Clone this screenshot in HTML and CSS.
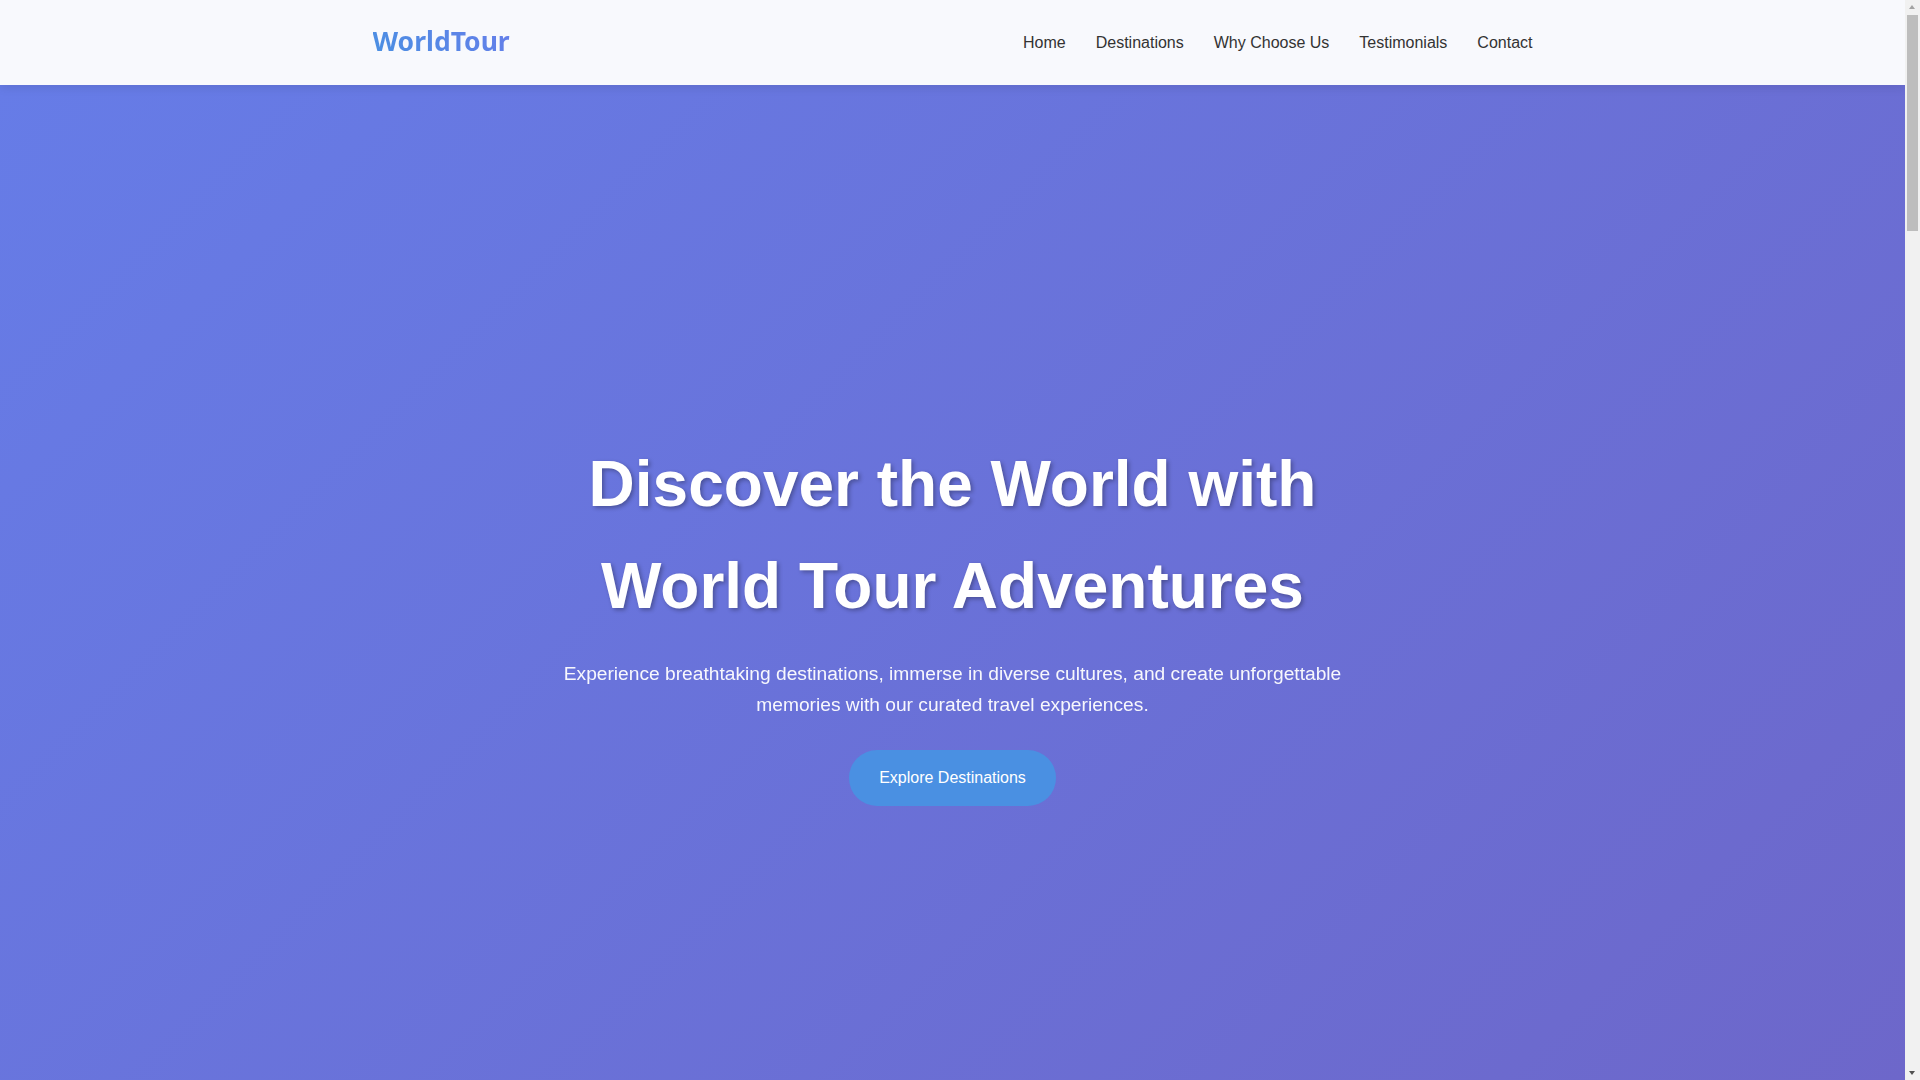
FILE: index.html
```html
<!DOCTYPE html>
<html lang="en">
<head>
<meta charset="UTF-8">
<title>WorldTour - Discover the World</title>
<link rel="stylesheet" href="styles.css">
</head>
<body>
<header class="site-header">
  <div class="container header-inner">
    <a class="logo" href="#">WorldTour</a>
    <nav class="main-nav">
      <a href="#home">Home</a>
      <a href="#destinations">Destinations</a>
      <a href="#why">Why Choose Us</a>
      <a href="#testimonials">Testimonials</a>
      <a href="#contact">Contact</a>
    </nav>
  </div>
</header>

<section class="hero" id="home">
  <div class="hero-content">
    <h1 class="hero-title">Discover the World with<br>World Tour Adventures</h1>
    <p class="hero-text">Experience breathtaking destinations, immerse in diverse cultures, and create unforgettable memories with our curated travel experiences.</p>
    <a class="btn" href="#destinations">Explore Destinations</a>
  </div>
</section>

<div class="scrollbar" aria-hidden="true">
  <span class="sb-arrow sb-up"></span>
  <span class="sb-thumb"></span>
  <span class="sb-arrow sb-down"></span>
</div>
</body>
</html>
```

FILE: styles.css
```css
* {
  box-sizing: border-box;
}

html,
body {
  height: 100%;
}

body {
  margin: 0;
  padding-right: 15px;
  font-family: "Liberation Sans", Arial, sans-serif;
  line-height: 1.6;
  color: #333;
  background: #fff;
  overflow: hidden;
}

.container {
  max-width: 1200px;
  margin: 0 auto;
  padding: 0 20px;
}

.site-header {
  position: relative;
  z-index: 100;
  background: #f8f9fd;
  box-shadow: 0 2px 10px rgba(0, 0, 0, 0.1);
}

.header-inner {
  height: 85px;
  display: flex;
  align-items: center;
  justify-content: space-between;
}

.logo {
  font-family: "Noto Sans", "Open Sans", sans-serif;
  font-weight: 700;
  font-size: 26.5px;
  line-height: 1.2;
  text-decoration: none;
  background: linear-gradient(45deg, #4a90e2, #667eea);
  -webkit-background-clip: text;
  background-clip: text;
  color: transparent;
  margin-top: -2px;
}

.main-nav {
  display: flex;
  gap: 30px;
}

.main-nav a {
  color: #333;
  text-decoration: none;
  font-size: 16px;
}

.hero {
  min-height: calc(100vh - 85px);
  background: linear-gradient(135deg, #667ce7 0%, #6d67ca 100%);
  padding: 348px 20px 0;
  text-align: center;
  color: #fff;
}

.hero-content {
  max-width: 900px;
  margin: 0 auto;
}

.hero-title {
  margin: 0 0 21px;
  font-size: 64px;
  font-weight: 700;
  line-height: 1.6;
  text-shadow: 2px 2px 4px rgba(0, 0, 0, 0.3);
}

.hero-text {
  max-width: 800px;
  margin: 0 auto 30px;
  font-size: 19.2px;
  line-height: 1.6;
  opacity: 0.95;
}

.btn {
  display: inline-block;
  padding: 15px 30px;
  background: #4a90e2;
  color: #fff;
  text-decoration: none;
  border-radius: 50px;
  font-size: 16px;
  line-height: 1.6;
}

/* browser scrollbar as seen in the reference */
.scrollbar {
  position: fixed;
  top: 0;
  right: 0;
  width: 15px;
  height: 100vh;
  background: #f1f1f1;
  z-index: 200;
}

.sb-thumb {
  position: absolute;
  top: 15px;
  left: 2px;
  width: 11px;
  height: 216px;
  background: #bdbdbd;
}

.sb-arrow {
  position: absolute;
  left: 4px;
  width: 0;
  height: 0;
  border-left: 3.5px solid transparent;
  border-right: 3.5px solid transparent;
}

.sb-up {
  top: 5px;
  border-bottom: 4px solid #a3a3a3;
}

.sb-down {
  bottom: 5px;
  border-top: 4px solid #505050;
}
```
